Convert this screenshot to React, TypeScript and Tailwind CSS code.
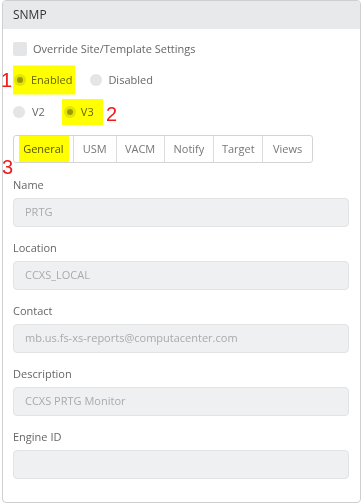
import React from "react";

const font = { fontFamily: '"Open Sans", "Liberation Sans", sans-serif' };

function Radio({ checked }: { checked?: boolean }) {
  return (
    <span className="relative inline-flex h-[12px] w-[12px] items-center justify-center rounded-full bg-[#e4e5e7]">
      {checked && <span className="h-[6px] w-[6px] rounded-full bg-[#9a9a9a]" />}
    </span>
  );
}

function Hl({ className }: { className: string }) {
  return (
    <span
      className={
        "pointer-events-none absolute top-1/2 -translate-y-1/2 bg-[#ffff00] mix-blend-multiply " + className
      }
    />
  );
}

function Ann({ n, className }: { n: string; className: string }) {
  return (
    <span
      className={"absolute text-[20px] leading-none text-[#ee1c1c] " + className}
      style={{ fontFamily: '"Liberation Sans", Arial, sans-serif' }}
    >
      {n}
    </span>
  );
}

function Field({ label, value, first }: { label: string; value: string; first?: boolean }) {
  return (
    <div className={first ? "mt-[14px]" : "mt-[13px]"}>
      <div className="h-[16px] text-[11px] leading-[16px] text-[#666]">{label}</div>
      <div className="mt-[5px] flex h-[29px] w-[336px] items-center rounded-[4px] border border-[#e2e3e5] bg-[#eff0f2] px-[11px] text-[11px] text-[#aaa]">
        {value}
      </div>
    </div>
  );
}

export default function App() {
  const tabs = [
    { t: "General", w: "w-[60px]" },
    { t: "USM", w: "w-[43px]" },
    { t: "VACM", w: "w-[48px]" },
    { t: "Notify", w: "w-[50px]" },
    { t: "Target", w: "w-[49px]" },
    { t: "Views", w: "w-[49px]" },
  ];
  return (
    <div className="relative h-[504px] w-[364px] bg-white" style={font}>
      <div className="ml-[2px] h-[503px] w-[359px] overflow-hidden rounded-[4px] border border-[#cfcfcf]">
        <div className="flex h-[28px] items-center bg-[#e8e9eb] px-[10px] text-[12px] text-[#333]">SNMP</div>
        <div className="px-[10px]">
          <div className="mt-[13px] flex h-[14px] items-center gap-[6px]">
            <span className="h-[14px] w-[14px] rounded-[2px] bg-[#e4e5e7]" />
            <span className="text-[11px] text-[#666]">Override Site/Template Settings</span>
          </div>
          <div className="mt-[14px] flex h-[20px] items-center">
            <div className="relative flex items-center">
              <span className="ml-[1px] flex"><Radio checked /></span>
              <span className="ml-[5px] text-[11px] text-[#666]">Enabled</span>
              <Hl className="left-0 h-[29px] w-[62px]" />
            </div>
            <div className="ml-[18px] flex items-center">
              <Radio />
              <span className="ml-[6px] text-[11px] text-[#666]">Disabled</span>
            </div>
          </div>
          <div className="mt-[12px] flex h-[20px] items-center">
            <Radio />
            <span className="ml-[7px] text-[11px] text-[#666]">V2</span>
            <div className="relative ml-[19px] flex items-center">
              <Radio checked />
              <span className="ml-[5px] text-[11px] text-[#666]">V3</span>
              <Hl className="-left-[2px] h-[26px] w-[41px]" />
            </div>
          </div>
          <div className="mt-[13px] flex h-[28px] w-[300px] rounded-[3px] border border-[#d4d4d4]">
            {tabs.map((tab, i) => (
              <div
                key={tab.t}
                className={
                  "relative flex h-full items-center justify-center text-[11px] text-[#777] " +
                  tab.w +
                  (i < tabs.length - 1 ? " border-r border-[#dcdcdc]" : "")
                }
              >
                <span className={i === 0 ? "text-[#555]" : ""}>{tab.t}</span>
                {i === 0 && <Hl className="left-[5px] h-[26px] w-[50px]" />}
              </div>
            ))}
          </div>
          <Field label="Name" value="PRTG" first />
          <Field label="Location" value="CCXS_LOCAL" />
          <Field label="Contact" value="mb.us.fs-xs-reports@computacenter.com" />
          <Field label="Description" value="CCXS PRTG Monitor" />
          <Field label="Engine ID" value="" />
        </div>
      </div>
      <Ann n="1" className="left-[1px] top-[70px]" />
      <Ann n="2" className="left-[106px] top-[104px]" />
      <Ann n="3" className="left-[2px] top-[157px]" />
    </div>
  );
}
